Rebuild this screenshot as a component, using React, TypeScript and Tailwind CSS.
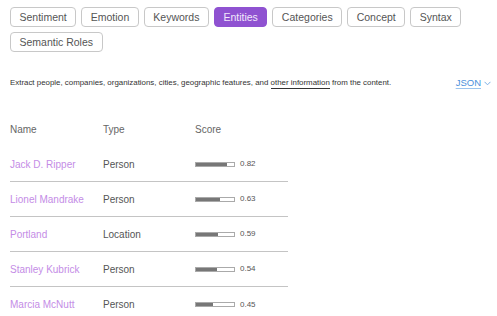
import React from "react";

const tabs = ["Sentiment", "Emotion", "Keywords", "Entities", "Categories", "Concept", "Syntax", "Semantic Roles"];

const entities = [
  { name: "Jack D. Ripper", type: "Person", score: 0.82 },
  { name: "Lionel Mandrake", type: "Person", score: 0.63 },
  { name: "Portland", type: "Location", score: 0.59 },
  { name: "Stanley Kubrick", type: "Person", score: 0.54 },
  { name: "Marcia McNutt", type: "Person", score: 0.45 },
];

const App: React.FC = () => {
  return (
    <div className="w-[497px] h-[316px] overflow-hidden bg-white font-['Liberation_Sans',Arial,sans-serif]">
      {/* Tabs */}
      <div className="flex flex-wrap gap-[5px] pl-[10px] pt-[7px] w-[475px]">
        {tabs.map((t) => (
          <button
            key={t}
            className={
              t === "Entities"
                ? "h-[20px] px-[8.5px] rounded-[4px] border border-[#8f52d1] bg-[#8f52d1] text-[10.5px] text-[#f2e9fb] leading-none"
                : "h-[20px] px-[8.5px] rounded-[4px] border border-[#c8c8c8] bg-white text-[10.5px] text-[#555] leading-none"
            }
          >
            {t}
          </button>
        ))}
      </div>

      {/* Description */}
      <div className="flex items-center justify-between h-[12px] pl-[10px] pr-[6px] mt-[25px]">
        <p className="text-[7.9px] text-[#333] leading-none">
          Extract people, companies, organizations, cities, geographic features, and{" "}
          <span className="border-b border-[#333] pb-[1px]">other information</span> from the content.
        </p>
        <button className="flex items-center gap-[3px] text-[9.5px] text-[#4a8fdb] leading-none">
          <span className="underline underline-offset-2 decoration-[#9cc4ee]">JSON</span>
          <svg width="7" height="5" viewBox="0 0 7 5" fill="none">
            <path d="M0.5 0.8 L3.5 3.8 L6.5 0.8" stroke="#7aaee6" strokeWidth="1" />
          </svg>
        </button>
      </div>

      {/* Table */}
      <div className="ml-[10px] mt-[22px] w-[278px] text-[10px]">
        <div className="flex text-[#666] h-[36px] items-center">
          <span className="w-[93px]">Name</span>
          <span className="w-[92px]">Type</span>
          <span>Score</span>
        </div>
        {entities.map((e, i) => (
          <div
            key={e.name}
            className={
              i < entities.length - 1
                ? "flex items-center h-[35px] border-b border-[#c4c4c4]"
                : "flex items-center h-[35px]"
            }
          >
            <span className="w-[93px] text-[#c48ce6]">{e.name}</span>
            <span className="w-[92px] text-[#555]">{e.type}</span>
            <span className="flex items-center gap-[5px]">
              <span className="w-[40px] h-[5px] border border-[#aaa] bg-white">
                <span className="block h-full bg-[#777]" style={{ width: `${e.score * 100}%` }} />
              </span>
              <span className="text-[8px] text-[#555]">{e.score.toFixed(2)}</span>
            </span>
          </div>
        ))}
      </div>
    </div>
  );
};

export default App;
